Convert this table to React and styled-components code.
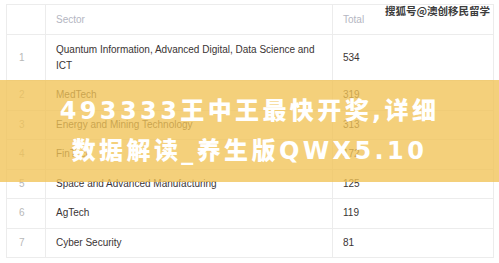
import React from 'react';
import styled, { createGlobalStyle } from 'styled-components';

const sectors = [
  { id: 1, name: 'Quantum Information, Advanced Digital, Data Science and ICT', total: 534, tall: true },
  { id: 2, name: 'MedTech', total: 319 },
  { id: 3, name: 'Energy and Mining Technology', total: 313 },
  { id: 4, name: 'FinTech', total: 172 },
  { id: 5, name: 'Space and Advanced Manufacturing', total: 125 },
  { id: 6, name: 'AgTech', total: 119 },
  { id: 7, name: 'Cyber Security', total: 81 },
];

const GlobalStyle = createGlobalStyle`
  html, body {
    margin: 0;
    padding: 0;
    background: #ffffff;
  }
  body {
    font-family: "Liberation Sans", Arial, sans-serif;
  }
`;

const Page = styled.div`
  position: relative;
  width: 499px;
  height: 263px;
  overflow: hidden;
  background: #fff;
  padding: 4px 6px 0;
  box-sizing: border-box;
`;

const Table = styled.table`
  width: 487px;
  border-collapse: collapse;
  table-layout: fixed;
  border: 1px solid #ececec;
  font-size: 10px;
  line-height: 16px;
`;

const Col = styled.col`
  width: ${({ $w }) => $w};
`;

const HeadCell = styled.th`
  height: 29px;
  padding: 0 10px;
  text-align: left;
  font-weight: normal;
  color: #b4b6c2;
  border: 1px solid #ececec;
`;

const Row = styled.tr`
  height: ${({ $tall }) => ($tall ? '46px' : '29.5px')};
`;

const Cell = styled.td`
  padding: 0 10px;
  color: ${({ $muted }) => ($muted ? '#b8b8b8' : '#3a3434')};
  border: 1px solid #ececec;
  vertical-align: middle;
  padding-left: ${({ $muted }) => ($muted ? '12px' : '10px')};
`;

const Band = styled.div`
  position: absolute;
  left: 0;
  right: 0;
  top: 80px;
  height: 102px;
  background: rgba(241, 195, 86, 0.78);
  display: flex;
  align-items: center;
  justify-content: center;
`;

const Headline = styled.div`
  color: #ffffff;
  font-family: "DejaVu Sans", "Noto Sans CJK SC", sans-serif;
  font-weight: 900;
  font-size: 24px;
  line-height: 40px;
  letter-spacing: 3.4px;
  text-align: center;
  white-space: nowrap;
`;

const Watermark = styled.div`
  position: absolute;
  top: 4px;
  right: 9px;
  font-family: "Noto Sans CJK SC", sans-serif;
  font-size: 10.5px;
  line-height: 14px;
  font-weight: 700;
  color: #3c3c3c;
  text-shadow: 0 0 2px #fff, 0 0 1px #fff;
`;

export default function App() {
  return (
    <Page>
      <GlobalStyle />
      <Table>
        <colgroup>
          <Col $w="39px" />
          <Col $w="287px" />
          <Col $w="161px" />
        </colgroup>
        <thead>
          <tr>
            <HeadCell />
            <HeadCell>Sector</HeadCell>
            <HeadCell>Total</HeadCell>
          </tr>
        </thead>
        <tbody>
          {sectors.map((s) => (
            <Row key={s.id} $tall={s.tall}>
              <Cell $muted>{s.id}</Cell>
              <Cell>{s.name}</Cell>
              <Cell>{s.total}</Cell>
            </Row>
          ))}
        </tbody>
      </Table>
      <Band>
        <Headline>
          493333王中王最快开奖,详细
          <br />
          数据解读_养生版QWX5.10
        </Headline>
      </Band>
      <Watermark>搜狐号@澳创移民留学</Watermark>
    </Page>
  );
}
